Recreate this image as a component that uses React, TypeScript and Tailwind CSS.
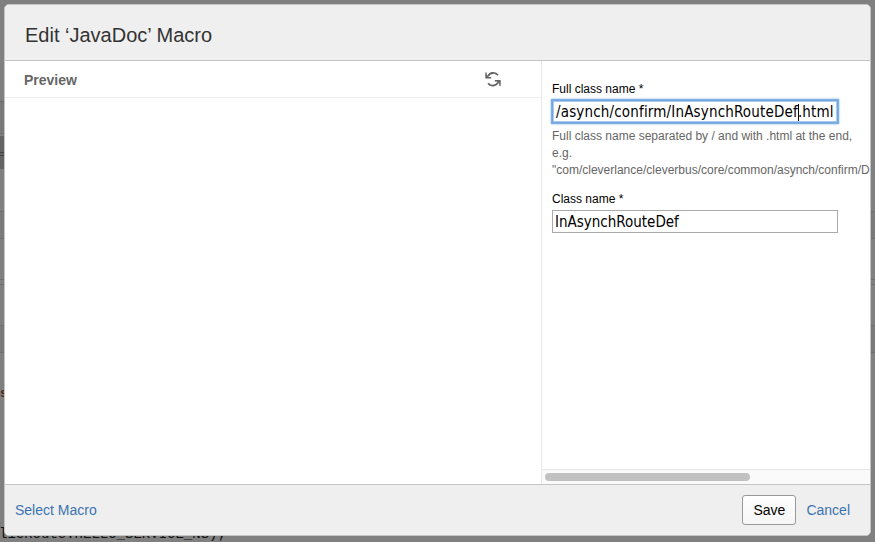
import React from "react";

const leftBands = [
  { top: 101, h: 1, c: "bg-[#6d6d6d]" },
  { top: 102, h: 31, c: "bg-[#7a7a78]" },
  { top: 133, h: 1, c: "bg-[#6d6d6d]" },
  { top: 136, h: 33, c: "bg-[#646464]" },
  { top: 152, h: 1, c: "bg-[#444444]" },
  { top: 155, h: 1, c: "bg-[#444444]" },
  { top: 211, h: 1, c: "bg-[#6f6f6f]" },
  { top: 212, h: 26, c: "bg-[#7a7a7a]" },
  { top: 238, h: 1, c: "bg-[#6f6f6f]" },
  { top: 279, h: 1, c: "bg-[#6f6f6f]" },
  { top: 284, h: 1, c: "bg-[#6f6f6f]" },
  { top: 325, h: 1, c: "bg-[#6f6f6f]" },
  { top: 326, h: 26, c: "bg-[#7a7a7a]" },
  { top: 352, h: 1, c: "bg-[#6f6f6f]" },
];

function Backdrop() {
  return (
    <div className="absolute inset-0">
      {leftBands.map((b) => (
        <div
          key={b.top}
          className={`absolute left-0 ${b.top > 200 ? "w-full" : "w-1"} ${b.c}`}
          style={{ top: b.top, height: b.h }}
        />
      ))}
      <span className="absolute top-[387px] left-0 font-['Liberation_Mono',monospace] text-[12px] leading-[14px] font-bold text-[#4a2418]">s</span>
      <span className="absolute top-[526px] -left-px font-['Liberation_Mono',monospace] text-[14px] leading-[16px] whitespace-pre text-[#111]">
        licRoute.HELLO_SERVICE_NS);
      </span>
    </div>
  );
}

function RefreshIcon() {
  return (
    <svg width="16" height="16" viewBox="0 0 16 16" fill="none" stroke="#666" strokeWidth="1.8">
      <path d="M3 5.2A6 6 0 0 1 13 4.200" />
      <path d="M13 11.300A6 6 0 0 1 3 12.300" />
      <path d="M1 1.500v5.200h5.200" strokeWidth="1.4" />
      <path d="M15 14.900V9.800H9.800" strokeWidth="1.4" />
      <path d="M1 6.700V3l3.700 3.700zM15 9.800v3.700l-3.700-3.700z" fill="#666" stroke="none" />
    </svg>
  );
}

export default function App() {
  return (
    <div className="relative h-[542px] w-[875px] overflow-hidden bg-[#808080] p-1 font-['Liberation_Sans',Arial,sans-serif]">
      <Backdrop />
      <div className="relative flex h-[532px] w-[867px] flex-col overflow-hidden rounded-[5px] border border-[#c4c4c4] bg-white">
        <header className="flex h-[56px] shrink-0 items-center border-b border-[#c4c4c4] bg-[#efefef] pt-[5px] pl-5">
          <h1 className="text-[20px] leading-6 text-[#333]">Edit ‘JavaDoc’ Macro</h1>
        </header>
        <main className="flex min-h-0 flex-1">
          <section className="w-[536px] shrink-0">
            <div className="flex h-[37px] items-center justify-between border-b border-[#ededed] pr-10 pl-[19px]">
              <h2 className="pt-[2px] text-[14px] leading-4 font-bold text-[#666]">Preview</h2>
              <RefreshIcon />
            </div>
          </section>
          <section className="flex min-w-0 flex-1 flex-col border-l border-[#e8e8e8]">
            <div className="flex-1 overflow-hidden pt-5 pl-[10px] text-[12px]">
              <label className="block h-[19px] leading-4 text-black">Full class name *</label>
              <div className="flex h-[23px] w-[286px] items-center border border-[#74a5dc] bg-white pt-px pl-[3px] font-['DejaVu_Sans_Condensed','DejaVu_Sans',sans-serif] text-[15px] tracking-[0.17px] whitespace-nowrap text-black shadow-[0_0_0_1px_#7fb0e4,0_0_2px_1px_#7fb0e4,inset_0_0_0_1px_#a9cbef]">
                <span>/asynch/confirm/InAsynchRouteDef</span>
                <span className="-mr-px h-[17px] w-px shrink-0 bg-black" />
                <span>.html</span>
              </div>
              <p className="mt-[5px] leading-[17px] text-[#666]">
                Full class name separated by / and with .html at the end,
                <br />
                e.g.
                <br />
                "com/cleverlance/cleverbus/core/common/asynch/confirm/D
              </p>
              <label className="mt-3 block h-[19px] leading-4 text-black">Class name *</label>
              <div className="flex h-[23px] w-[286px] items-center border border-[#aaa] bg-white pt-px pl-[2px] font-['DejaVu_Sans_Condensed','DejaVu_Sans',sans-serif] text-[15px] text-black">
                <span>InAsynchRouteDef</span>
              </div>
            </div>
            <div className="flex h-[15px] shrink-0 items-center border-t border-[#e4e4e4] bg-[#fafafa] pl-[3px]">
              <div className="h-2 w-[205px] rounded-full bg-[#c1c1c1]" />
            </div>
          </section>
        </main>
        <footer className="flex h-[51px] shrink-0 items-center border-t border-[#c4c4c4] bg-[#efefef] pr-5 pl-[10px] text-[14px] text-[#3b73af]">
          <span className="flex-1">Select Macro</span>
          <button className="mr-[10px] h-[30px] w-[54px] rounded-[3px] border border-[#999] bg-gradient-to-b from-white to-[#f5f5f5] text-black">Save</button>
          <span>Cancel</span>
        </footer>
      </div>
    </div>
  );
}
